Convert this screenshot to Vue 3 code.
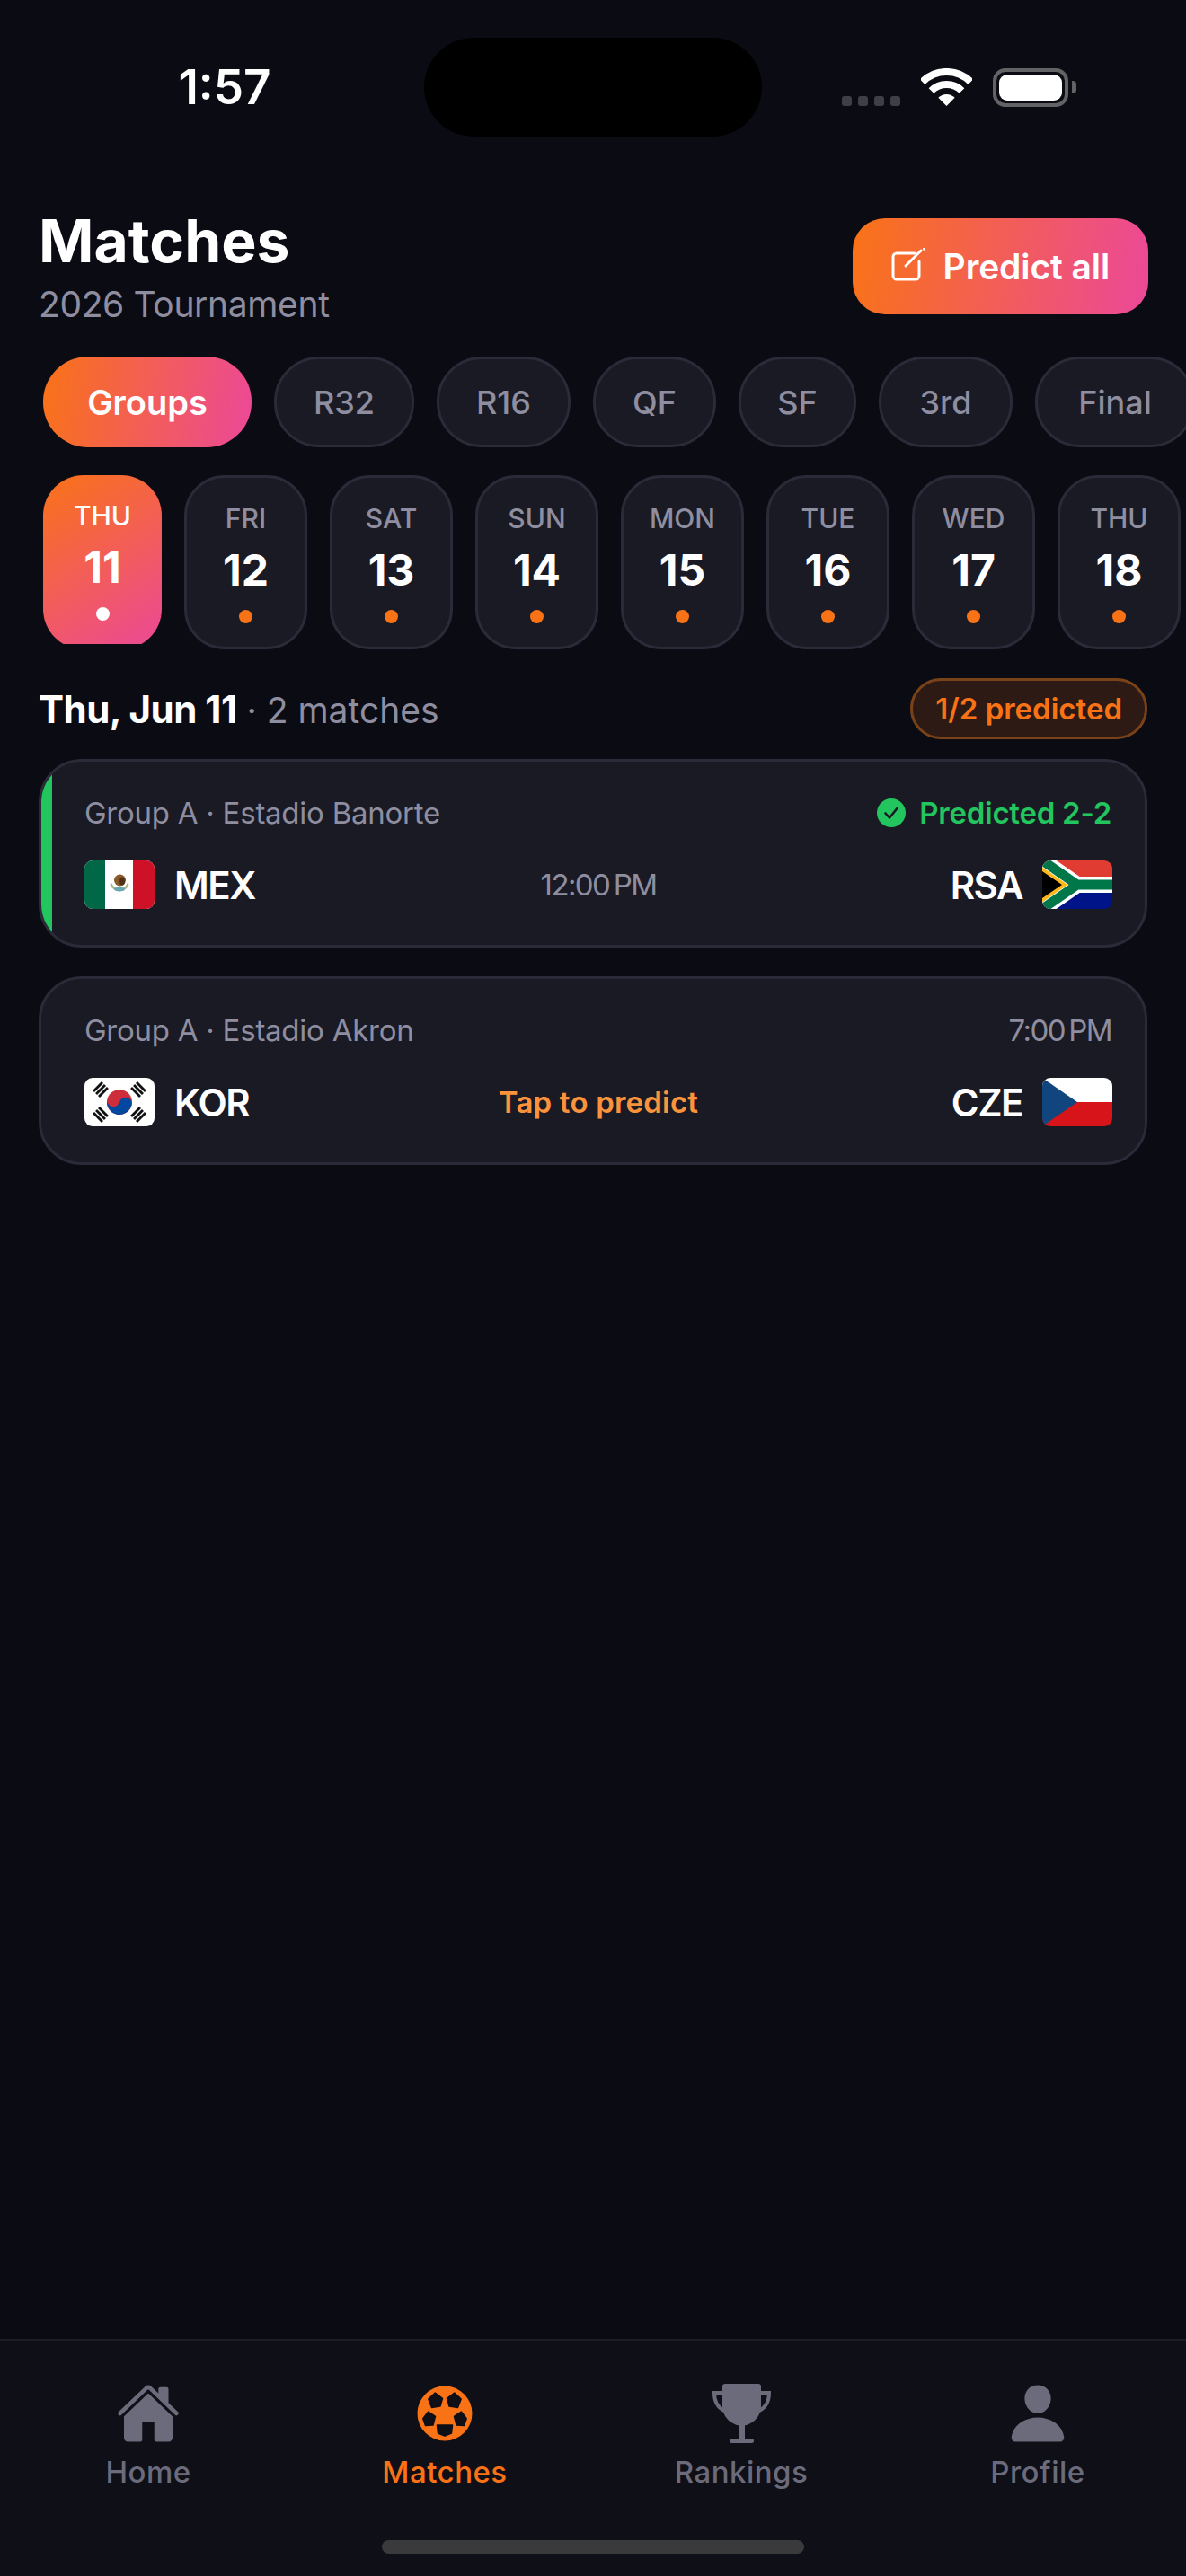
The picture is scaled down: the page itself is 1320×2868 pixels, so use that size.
<script setup>
const stages = [
  { label: 'R32', width: 156 },
  { label: 'R16', width: 149 },
  { label: 'QF', width: 137 },
  { label: 'SF', width: 131 },
  { label: '3rd', width: 149 },
  { label: 'Final', width: 178 }
]

const days = [
  { name: 'FRI', num: 12 },
  { name: 'SAT', num: 13 },
  { name: 'SUN', num: 14 },
  { name: 'MON', num: 15 },
  { name: 'TUE', num: 16 },
  { name: 'WED', num: 17 },
  { name: 'THU', num: 18 }
]

const tabs = ['Home', 'Matches', 'Rankings', 'Profile']
</script>

<template>
  <div class="app">
    <div class="status-bar">
      <div class="time">1:57</div>
      <div class="notch"></div>
      <div class="status-icons">
        <div class="signal">
          <span v-for="n in 4" :key="n"></span>
        </div>
        <svg class="wifi" width="57" height="42" viewBox="0 0 57 42">
          <path d="M1.6 15.1A38 38 0 0 1 55.4 15.1" fill="none" stroke="#fff" stroke-width="8" />
          <path d="M11.5 25A24 24 0 0 1 45.5 25" fill="none" stroke="#fff" stroke-width="8" />
          <path d="M28.5 42L19.3 32.8A13 13 0 0 1 37.7 32.8Z" fill="#fff" />
        </svg>
        <div class="battery"><div class="battery-fill"></div></div>
        <div class="battery-cap"></div>
      </div>
    </div>

    <div class="header">
      <div>
        <h1 class="title">Matches</h1>
        <p class="subtitle">2026 Tournament</p>
      </div>
      <button class="predict-btn">
        <svg width="40" height="40" viewBox="0 0 40 40" fill="none" stroke="#fff" stroke-width="3" stroke-linecap="round">
          <path d="M26 6H6a4 4 0 0 0-4 4v21a4 4 0 0 0 4 4h21a4 4 0 0 0 4-4V15" />
          <path d="M16 20L33 3" />
          <path d="M36.5 1v0.2" />
        </svg>
        <span>Predict all</span>
      </button>
    </div>

    <div class="stages">
      <div class="stage active" :style="{ width: '232px' }">Groups</div>
      <div v-for="s in stages" :key="s.label" class="stage" :style="{ width: s.width + 'px' }">{{ s.label }}</div>
    </div>

    <div class="days">
      <div class="day active">
        <div class="day-name">THU</div>
        <div class="day-num">11</div>
        <div class="day-dot"></div>
      </div>
      <div v-for="d in days" :key="d.num" class="day">
        <div class="day-name">{{ d.name }}</div>
        <div class="day-num">{{ d.num }}</div>
        <div class="day-dot"></div>
      </div>
    </div>

    <div class="date-row">
      <div class="date-text">
        <strong>Thu, Jun 11</strong><span> · 2 matches</span>
      </div>
      <div class="badge">1/2 predicted</div>
    </div>

    <div class="cards">
      <div class="card">
        <div class="card-bar"></div>
        <div class="card-top">
          <span class="venue">Group A · Estadio Banorte</span>
          <span class="predicted">
            <svg width="32" height="32" viewBox="0 0 32 32">
              <circle cx="16" cy="16" r="16" fill="#22c55e" />
              <path d="M9.5 16.5l4.5 5 8.5-10.5" fill="none" stroke="#1a1a24" stroke-width="2.6" stroke-linecap="round" stroke-linejoin="round" />
            </svg>
            Predicted 2-2
          </span>
        </div>
        <div class="card-row">
          <div class="team">
            <svg class="flag" viewBox="0 0 78 54">
              <rect width="78" height="54" fill="#fff" />
              <rect width="23" height="54" fill="#006847" />
              <rect x="54" width="24" height="54" fill="#ce1126" />
              <path d="M29.5 26a10 10 0 0 0 19 0" fill="none" stroke="#a9b78e" stroke-width="2.5" />
              <ellipse cx="39" cy="32" rx="6" ry="2.5" fill="#6aa7b0" />
              <ellipse cx="39.5" cy="22" rx="6.5" ry="6.5" fill="#8a5a2b" />
              <ellipse cx="42" cy="23" rx="3" ry="4.5" fill="#4f3319" />
            </svg>
            <span class="code">MEX</span>
          </div>
          <div class="clock">12:00&#8239;PM</div>
          <div class="team right">
            <span class="code">RSA</span>
            <svg class="flag" viewBox="0 0 90 60" preserveAspectRatio="none">
              <rect width="90" height="30" fill="#e03c31" />
              <rect y="30" width="90" height="30" fill="#001489" />
              <path d="M0 0L45 30H90M0 60L45 30" fill="none" stroke="#fff" stroke-width="20" />
              <path d="M0 0L45 30H90M0 60L45 30" fill="none" stroke="#007749" stroke-width="12" />
              <path d="M0 10L30 30L0 50Z" fill="#000" />
              <path d="M-2 9.5L29 30L-2 50.5" fill="none" stroke="#ffb81c" stroke-width="4" />
            </svg>
          </div>
        </div>
      </div>

      <div class="card">
        <div class="card-top">
          <span class="venue">Group A · Estadio Akron</span>
          <span class="clock">7:00&#8239;PM</span>
        </div>
        <div class="card-row">
          <div class="team">
            <svg class="flag" viewBox="0 0 78 54">
              <defs>
                <g id="trigram" fill="#111">
                  <rect x="-7" y="-5.6" width="14" height="2.8" />
                  <rect x="-7" y="-1.4" width="14" height="2.8" />
                  <rect x="-7" y="2.8" width="14" height="2.8" />
                </g>
              </defs>
              <rect width="78" height="54" fill="#fff" />
              <use href="#trigram" transform="translate(18 13) rotate(-45)" />
              <use href="#trigram" transform="translate(60 13) rotate(45)" />
              <use href="#trigram" transform="translate(18 41) rotate(45)" />
              <use href="#trigram" transform="translate(60 41) rotate(-45)" />
              <g transform="translate(39 27) rotate(15)">
                <circle r="14" fill="#cd2e3a" />
                <path d="M-14 0A14 14 0 0 0 14 0A7 7 0 0 0 0 0A7 7 0 0 1 -14 0Z" fill="#0047a0" />
              </g>
            </svg>
            <span class="code">KOR</span>
          </div>
          <div class="tap">Tap to predict</div>
          <div class="team right">
            <span class="code">CZE</span>
            <svg class="flag" viewBox="0 0 78 54">
              <rect width="78" height="27" fill="#fff" />
              <rect y="27" width="78" height="27" fill="#d7141a" />
              <path d="M0 0L39 27L0 54Z" fill="#11457e" />
            </svg>
          </div>
        </div>
      </div>
    </div>

    <div class="tabbar">
      <div class="tabs">
        <div v-for="t in tabs" :key="t" class="tab" :class="{ active: t === 'Matches' }">
          <svg v-if="t === 'Home'" width="72" height="72" viewBox="0 0 512 512" fill="#6b6b7b">
            <path d="M261.56 101.28a8 8 0 00-11.06 0L66.4 277.15a8 8 0 00-2.47 5.79L63.9 448a32 32 0 0032 32H192a16 16 0 0016-16V328a8 8 0 018-8h80a8 8 0 018 8v136a16 16 0 0016 16h96.06a32 32 0 0032-32V282.94a8 8 0 00-2.47-5.79z" />
            <path d="M490.91 244.15l-74.8-71.56V64a16 16 0 00-16-16h-48a16 16 0 00-16 16v32l-57.92-55.38C272.77 35.14 264.71 32 256 32c-8.68 0-16.72 3.14-22.14 8.63l-212.7 203.5c-6.22 6-7 15.87-1.34 22.37A16 16 0 0043 267.56L250.5 69.28a8 8 0 0111.06 0l207.52 198.28a16 16 0 0022.59-.44c6.14-6.36 5.63-16.86-.76-22.97z" />
          </svg>
          <svg v-else-if="t === 'Matches'" width="72" height="72" viewBox="0 0 72 72">
            <circle cx="36" cy="36" r="30.5" fill="#f97316" />
            <g fill="#0f0f17" stroke="#0f0f17" stroke-width="1.5" stroke-linejoin="round">
              <path d="M25.3 13L33.5 19.3L31 28L21.5 29.5L17.8 20Z" />
              <path d="M46.7 13L38.5 19.3L41 28L50.5 29.5L54.2 20Z" />
              <path d="M17.7 34L25.5 39.3L23 49L14.5 49.5L11.8 41.7Z" />
              <path d="M54.3 34L46.5 39.3L49 49L57.5 49.5L60.2 41.7Z" />
              <path d="M27.5 49H44.5L43.5 58L36 61L28.5 58Z" />
            </g>
          </svg>
          <svg v-else-if="t === 'Rankings'" width="72" height="72" viewBox="0 0 72 72" fill="#6b6b7b">
            <path d="M18 3H55a3 3 0 0 1 3 3V28C58 40 48 49 36.5 50C25 49 15 40 15 28V6a3 3 0 0 1 3-3Z" />
            <path d="M16 13H6C6 22 9 29 17 33M57 13H67C67 22 64 29 56 33" fill="none" stroke="#6b6b7b" stroke-width="4" />
            <rect x="34" y="48" width="6" height="18" />
            <rect x="23" y="64" width="27" height="5" rx="2.5" />
          </svg>
          <svg v-else width="72" height="72" viewBox="0 0 512 512" fill="#6b6b7b">
            <path d="M332.64 64.58C313.18 43.57 286 32 256 32c-30.16 0-57.43 11.5-76.8 32.38-19.58 21.11-29.12 49.8-26.88 80.78C156.76 206.28 203.27 256 256 256s99.16-49.71 103.67-110.82c2.27-30.7-7.33-59.33-27.03-80.6zM432 480H80a31 31 0 01-24.2-11.13c-6.5-7.77-9.12-18.38-7.18-29.11C57.06 392.94 83.4 353.61 124.8 326c36.78-24.51 83.37-38 131.2-38s94.42 13.5 131.2 38c41.4 27.6 67.74 66.93 76.18 113.75 1.94 10.73-.68 21.34-7.18 29.11A31 31 0 01432 480z" />
          </svg>
          <span class="tab-label">{{ t }}</span>
        </div>
      </div>
      <div class="home-indicator"></div>
    </div>
  </div>
</template>

<style>
html,
body {
  background: #0b0b13;
}
</style>

<style scoped>
.app {
  width: 1320px;
  height: 2868px;
  overflow: hidden;
  display: flex;
  flex-direction: column;
  background: #0b0b13;
  color: #fff;
  font-family: Inter, "Noto Sans", sans-serif;
}

/* status bar */
.status-bar {
  display: grid;
  grid-template-columns: 1fr 376px 1fr;
  align-items: center;
  padding-top: 42px;
}

.time {
  text-align: center;
  padding-left: 28px;
  font-size: 53px;
  font-weight: 600;
}

.notch {
  height: 110px;
  border-radius: 55px;
  background: #000;
}

.status-icons {
  display: flex;
  align-items: flex-end;
  padding-left: 89px;
}

.signal {
  display: flex;
  gap: 7px;
  margin-bottom: 1px;
}

.signal span {
  width: 11px;
  height: 11px;
  border-radius: 3px;
  background: #3f3f46;
}

.wifi {
  margin-left: 23px;
  margin-bottom: 1px;
}

.battery {
  margin-left: 23px;
  width: 84px;
  height: 43px;
  box-sizing: border-box;
  padding: 3px;
  border: 4px solid #636366;
  border-radius: 14px;
}

.battery-fill {
  height: 100%;
  border-radius: 9px;
  background: #fff;
}

.battery-cap {
  width: 5px;
  height: 14px;
  margin: 0 0 15px 4px;
  border-radius: 0 4px 4px 0;
  background: #636366;
}

/* header */
.header {
  display: flex;
  align-items: center;
  justify-content: space-between;
  margin-top: 77px;
  padding: 0 42px 0 43px;
}

.title {
  margin: 0;
  font-size: 66px;
  line-height: 78px;
  font-weight: 700;
}

.subtitle {
  margin: 8px 0 0;
  font-size: 39px;
  line-height: 48px;
  letter-spacing: -0.35px;
  color: #8e8ea0;
}

.predict-btn {
  display: flex;
  align-items: center;
  gap: 18px;
  height: 107px;
  padding: 0 43px;
  border: none;
  border-radius: 36px;
  background: linear-gradient(100deg, #f97316 0%, #ec4899 100%);
  color: #fff;
  font-family: inherit;
  font-size: 39px;
  font-weight: 600;
  letter-spacing: -0.1px;
}

/* stages */
.stages {
  display: flex;
  flex: none;
  gap: 25px;
  margin-top: 34px;
  padding-left: 48px;
}

.stage {
  flex: none;
  display: flex;
  align-items: center;
  justify-content: center;
  height: 101px;
  box-sizing: border-box;
  border: 3px solid #2a2a38;
  border-radius: 50px;
  background: #1a1a24;
  color: #8e8ea0;
  font-size: 36px;
  font-weight: 500;
}

.stage.active {
  border: none;
  background: linear-gradient(100deg, #f97316 0%, #ec4899 100%);
  color: #fff;
  font-size: 38px;
  font-weight: 600;
}

/* day strip */
.days {
  display: flex;
  flex: none;
  gap: 25px;
  margin-top: 31px;
  padding-left: 48px;
}

.day {
  flex: none;
  display: flex;
  flex-direction: column;
  align-items: center;
  width: 137px;
  height: 194px;
  box-sizing: border-box;
  padding-top: 27px;
  border: 3px solid #2a2a38;
  border-radius: 45px;
  background: #1a1a24;
}

.day.active {
  width: 132px;
  border: none;
  background: linear-gradient(145deg, #f97316 0%, #ec4899 100%);
  clip-path: inset(0 0 6px 0);
}

.day-name {
  font-size: 30px;
  line-height: 36px;
  font-weight: 500;
  color: #8e8ea0;
}

.day.active .day-name {
  color: #fff;
}

.day-num {
  margin-top: 11px;
  font-size: 48px;
  line-height: 58px;
  font-weight: 700;
}

.day-dot {
  width: 15px;
  height: 15px;
  margin-top: 15px;
  border-radius: 50%;
  background: #f97316;
}

.day.active .day-dot {
  background: #fff;
}

/* date row */
.date-row {
  display: flex;
  align-items: center;
  justify-content: space-between;
  margin-top: 32px;
  padding: 0 43px;
}

.date-text strong {
  font-size: 42px;
  font-weight: 700;
  letter-spacing: -0.5px;
}

.date-text span {
  font-size: 39px;
  color: #8e8ea0;
}

.badge {
  display: flex;
  align-items: center;
  height: 68px;
  box-sizing: border-box;
  padding: 0 25px;
  border: 3px solid #7a4219;
  border-radius: 34px;
  background: #2d1a14;
  color: #f97316;
  font-size: 33px;
  font-weight: 600;
}

/* match cards */
.cards {
  display: flex;
  flex-direction: column;
  gap: 32px;
  margin-top: 22px;
  padding: 0 43px;
}

.card {
  position: relative;
  overflow: hidden;
  height: 210px;
  box-sizing: border-box;
  padding: 35px 36px 0 48px;
  border: 3px solid #2a2a38;
  border-radius: 48px;
  background: #1a1a24;
}

.card-bar {
  position: absolute;
  top: 0;
  bottom: 0;
  left: 0;
  width: 12px;
  background: #22c55e;
}

.card-top {
  display: flex;
  align-items: center;
  justify-content: space-between;
  height: 44px;
  padding-right: 1px;
}

.venue {
  font-size: 33px;
  letter-spacing: -0.25px;
  color: #8e8ea0;
}

.predicted {
  display: flex;
  align-items: center;
  gap: 15px;
  font-size: 33px;
  font-weight: 600;
  letter-spacing: -0.25px;
  color: #22c55e;
}

.card-row {
  display: grid;
  grid-template-columns: 1fr auto 1fr;
  align-items: center;
  margin-top: 31px;
}

.team {
  display: flex;
  align-items: center;
  gap: 22px;
}

.team.right {
  justify-content: flex-end;
}

.flag {
  display: block;
  width: 78px;
  height: 54px;
  border-radius: 9px;
}

.code {
  font-size: 42px;
  font-weight: 600;
  letter-spacing: -1.5px;
}

.clock {
  font-size: 33px;
  letter-spacing: -1.6px;
  color: #8e8ea0;
}

.tap {
  font-size: 33px;
  font-weight: 600;
  letter-spacing: 0.2px;
  color: #fb923c;
}

/* tab bar */
.tabbar {
  margin-top: auto;
  height: 264px;
  box-sizing: border-box;
  padding-top: 45px;
  border-top: 2px solid #1c1c28;
  background: #0f0f17;
}

.tabs {
  display: grid;
  grid-template-columns: repeat(4, 1fr);
}

.tab {
  display: flex;
  flex-direction: column;
  align-items: center;
  gap: 9px;
  color: #6b6b7b;
}

.tab.active {
  color: #f97316;
}

.tab-label {
  font-size: 33px;
  line-height: 40px;
  font-weight: 500;
  letter-spacing: 0.5px;
}

.home-indicator {
  width: 470px;
  height: 15px;
  margin: 56px auto 0;
  border-radius: 8px;
  background: #3a3a3c;
}
</style>
